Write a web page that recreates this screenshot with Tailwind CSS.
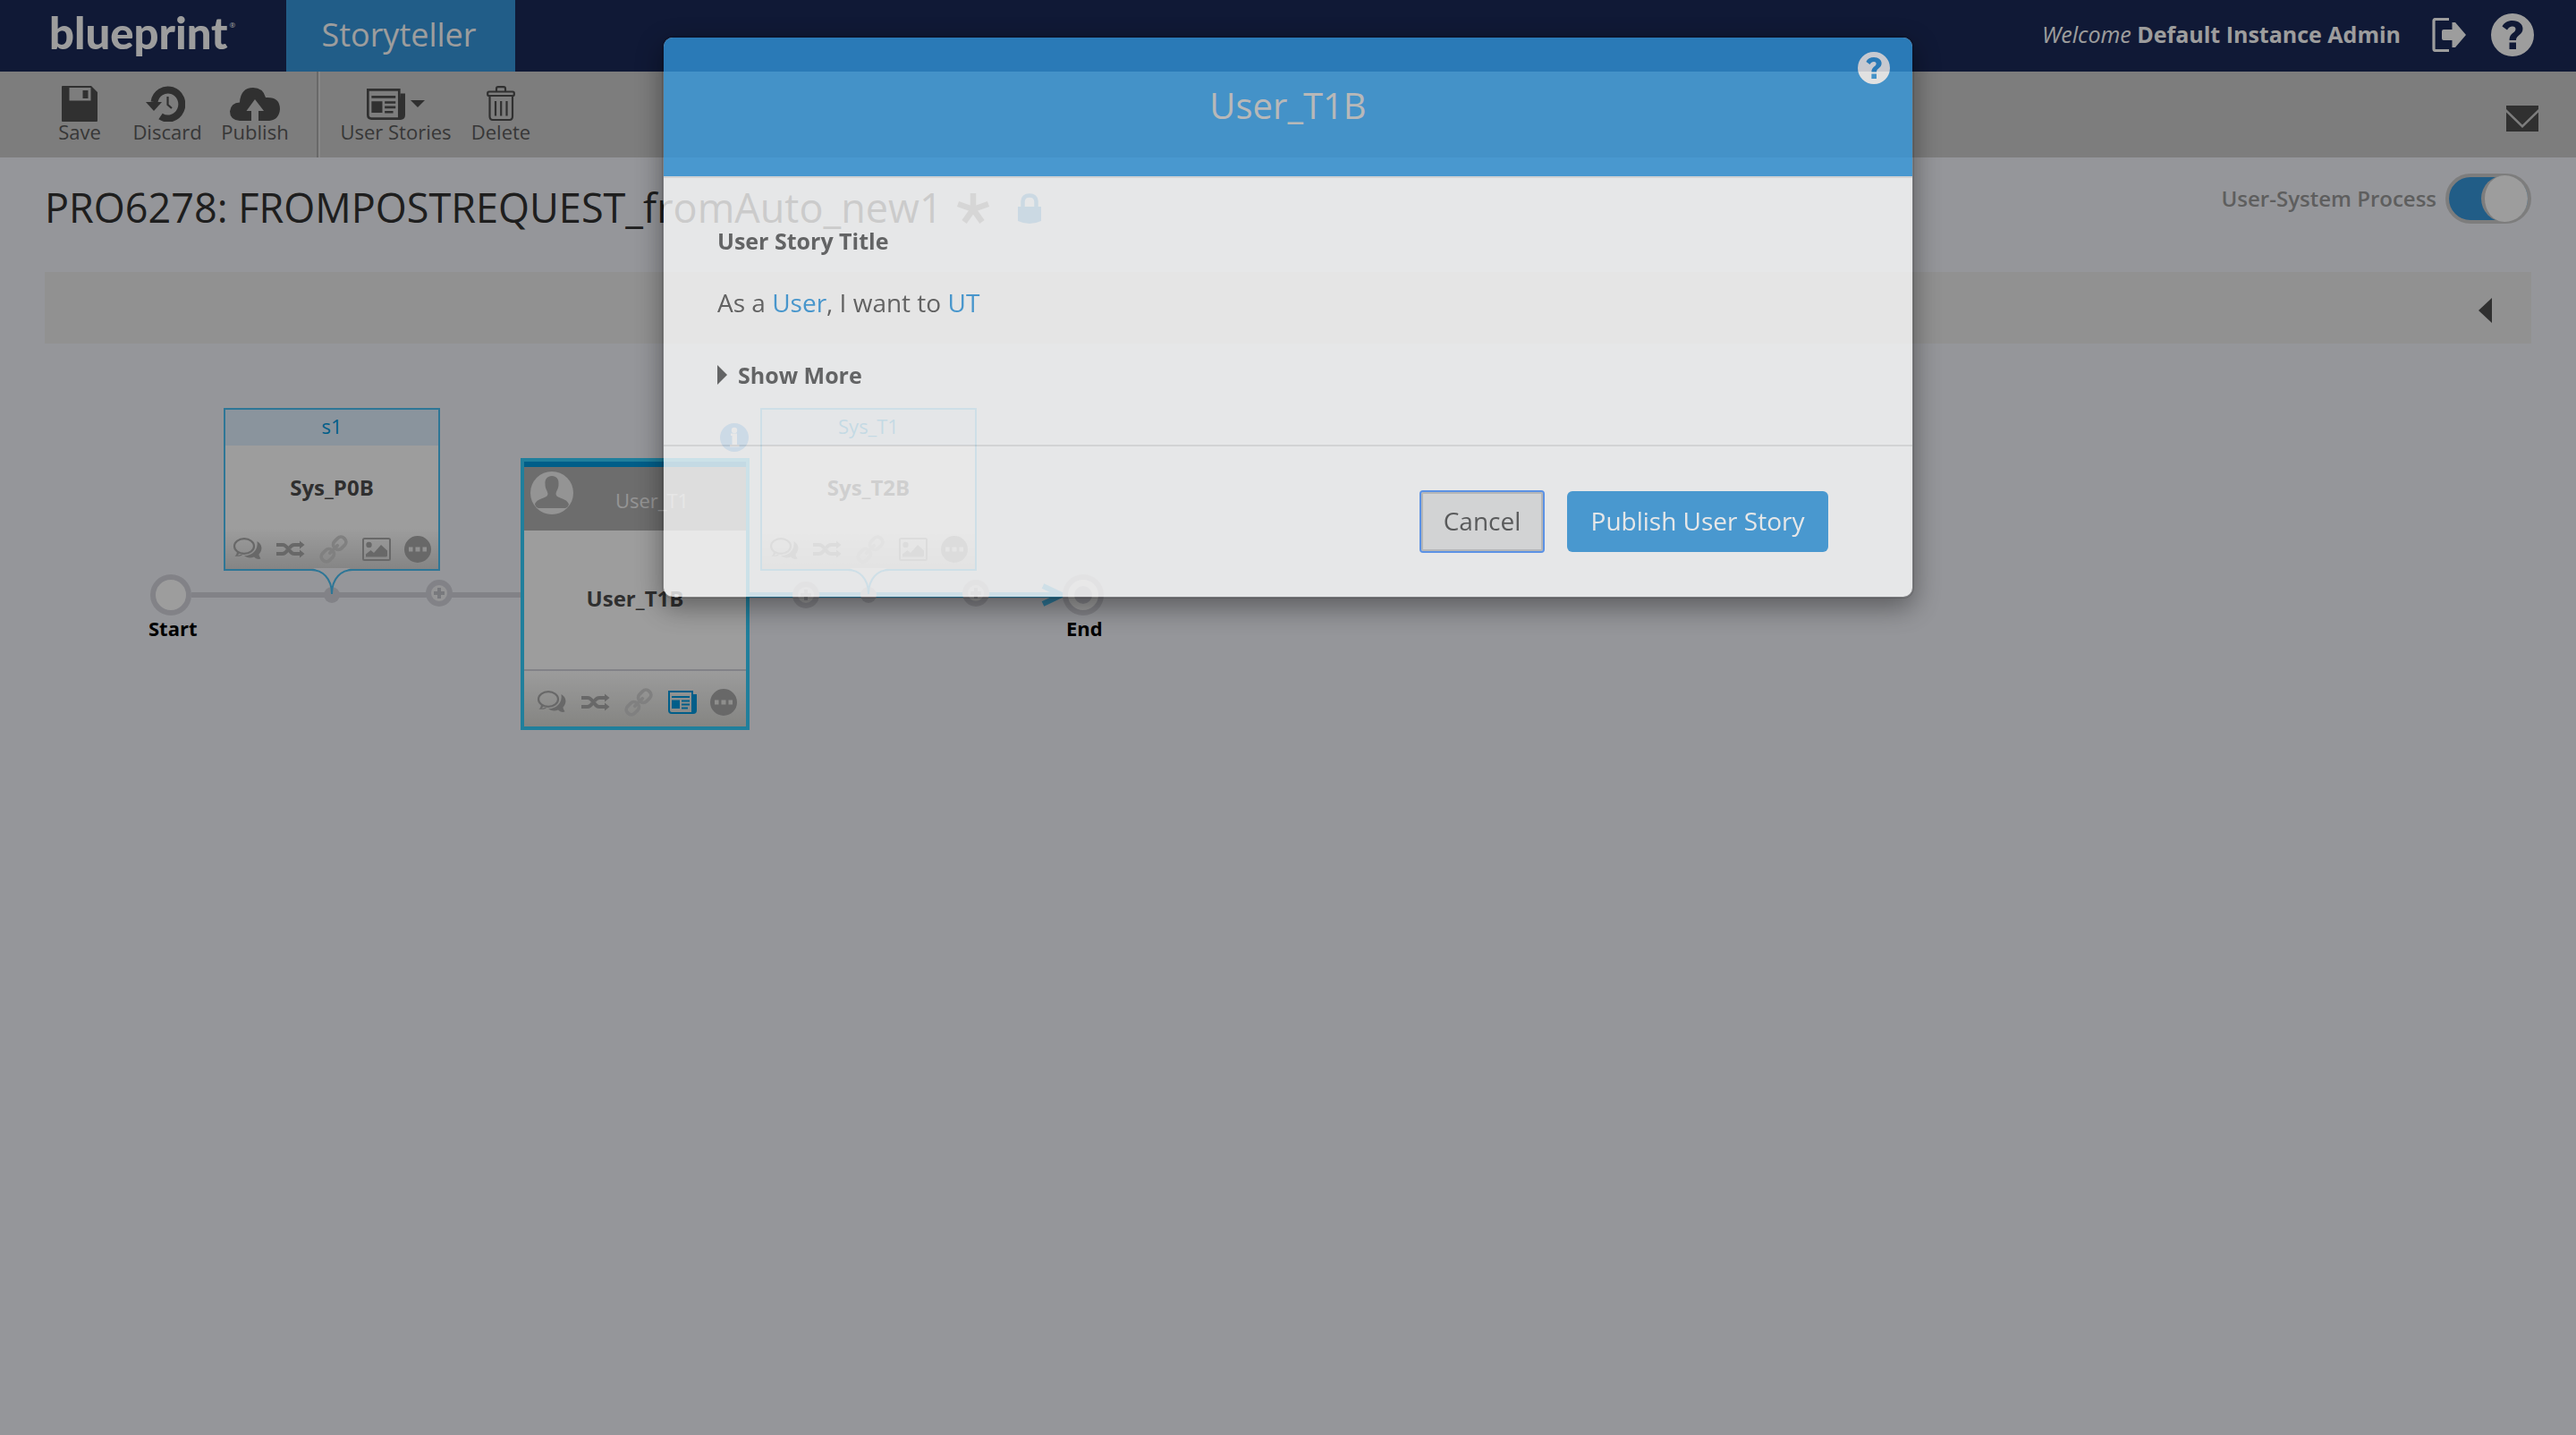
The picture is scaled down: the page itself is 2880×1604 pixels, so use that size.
<!DOCTYPE html>
<html lang="en">
<head>
<meta charset="utf-8">
<title>Storyteller</title>
<script src="https://cdn.jsdelivr.net/npm/@tailwindcss/browser@4"></script>
</head>
<body class="min-h-screen bg-[#f2f4fa] font-['Open_Sans',sans-serif] text-[#4d4d4d]">

<!-- shared icons -->
<svg class="hidden" aria-hidden="true">
  <symbol id="comments" viewBox="0 0 34 28">
    <ellipse cx="13" cy="10.500" rx="11" ry="8.400" fill="none" stroke="currentColor" stroke-width="2.200"/>
    <path d="M5 16.500 L7.500 18 C7 19.500 6 20.500 5.500 20.500 C8 20.500 10 20 12 18.500 L10 21 C7.500 22 4.500 22 2.500 21.700 C4 20.500 5 18.500 5 16.500z" fill="currentColor"/>
    <path d="M27.500 5 C33.500 8.500 34 15 29.500 19.500 C29.500 21.500 31 23 31.500 24.500 C28.500 25.500 26 24.500 24 22.500 C20 24.500 15 23 13 21.300 C22 21 29 15 27.500 5z" fill="currentColor"/>
  </symbol>
  <symbol id="shuffle" viewBox="0 0 32 20">
    <path d="M0 5 H7 C13 5 14 15 20 15 H26" fill="none" stroke="currentColor" stroke-width="4"/>
    <path d="M0 15 H7 C10 15 11.500 12.500 12.500 11 M14.500 8.500 C16 6.500 17.500 5 20 5 H26" fill="none" stroke="currentColor" stroke-width="4"/>
    <path d="M26 0.500 L31.500 5 L26 9.500z M26 10.500 L31.500 15 L26 19.500z" fill="currentColor"/>
  </symbol>
  <symbol id="link" viewBox="0 0 34 34">
    <g fill="none" stroke="currentColor" stroke-width="3.800" transform="rotate(-45 17 17)">
      <rect x="0" y="11.500" width="15" height="11" rx="5"/>
      <rect x="19" y="11.500" width="15" height="11" rx="5"/>
      <path d="M11 17 H23" stroke-linecap="round"/>
    </g>
  </symbol>
  <symbol id="image" viewBox="0 0 32 26">
    <rect x="1" y="1" width="30" height="24" rx="1.500" fill="none" stroke="currentColor" stroke-width="2"/>
    <circle cx="7.500" cy="8" r="3.200" fill="currentColor"/>
    <path d="M4 21.500 V18.500 L9.500 14 L13 17 L21 8 L28 14.500 V20 Q28 21.500 26 21.500z" fill="currentColor"/>
  </symbol>
  <symbol id="more" viewBox="0 0 30 30">
    <path fill="currentColor" fill-rule="evenodd" d="M15 0a15 15 0 1 0 0 30a15 15 0 1 0 0-30z M5 12.500h4.500v5h-4.500z M12.500 12.500h5v5h-5z M20.500 12.500h4.500v5h-4.500z"/>
  </symbol>
  <symbol id="news" viewBox="0 0 32 26">
    <path d="M1 1 H27 V25 H4 Q1 25 1 22z" fill="none" stroke="currentColor" stroke-width="2"/>
    <path d="M28 4 H32 V22 Q32 26 28 26 H26z M4 6h20v2H4z M4 10.500h9v9.500H4z M15 10.500h9v2h-9z M15 14.500h9v2h-9z M15 18.500h7v2h-7z" fill="currentColor"/>
  </symbol>
  <symbol id="help" viewBox="0 0 48 48">
    <path fill="currentColor" fill-rule="evenodd" d="M24 0a24 24 0 1 0 0 48a24 24 0 1 0 0-48z M12.500 14.500 C14.500 10.500 18.500 8 24 8 C31 8 35.500 12 35.500 17 C35.500 24.500 28 24 28 30 H20.500 C20.500 21.500 27.500 22 27.500 17.500 C27.500 15.500 26 14.500 24 14.500 C21.500 14.500 19.500 16 18 18.500z M20.500 32.500h7.500v7.500h-7.500z"/>
  </symbol>
</svg>

<header class="flex h-20 items-stretch bg-[#1a2a58] text-white">
  <a href="#" class="flex w-80 items-center pl-[55px] pb-2 font-[Lato,sans-serif] text-[49px] leading-none font-black">blueprint<span class="self-start pt-6 pl-0.5 font-['Open_Sans',sans-serif] text-[8px] leading-none font-normal">®</span></a>
  <a href="#" class="flex w-64 items-center justify-center bg-[#3697dd] pr-1 pb-[3px] text-4xl">Storyteller</a>
  <div class="flex flex-1 items-center justify-end gap-[35px] pr-[47px] pb-[3px]">
    <p class="text-[25px]"><i>Welcome</i> <b>Default Instance Admin</b></p>
    <div class="flex items-center gap-7">
      <button aria-label="Log out">
        <svg class="h-[38px] w-[38px]" viewBox="0 0 38 38"><path d="M19 1.500 H4 Q2 1.500 2 3.500 V34.500 Q2 36.500 4 36.500 H19" fill="none" stroke="currentColor" stroke-width="3.200"/><path d="M13 13 H22.500 V5 H26 L38 19 L26 33 H22.500 V25 H13 Q11 25 11 23 V15 Q11 13 13 13z" fill="currentColor"/></svg>
      </button>
      <button aria-label="Help"><svg class="size-12"><use href="#help"/></svg></button>
    </div>
  </div>
</header>

<nav class="flex h-24 items-stretch bg-[#cbcbcb] pr-[42px] pl-10 text-[22px] leading-[22px] text-[#5a5a5a]">
  <button class="flex w-[98px] flex-col items-center pt-4">
    <svg class="h-10 w-10 text-[#4e4e4e]" viewBox="0 0 40 40"><path fill="currentColor" fill-rule="evenodd" d="M1 0 H33 L40 7 V39 Q40 40 39 40 H1 Q0 40 0 39 V1 Q0 0 1 0z M8.500 2 V16.500 H32.500 V2z M23.500 5 h6 v9 h-6z"/></svg>
    Save
  </button>
  <button class="flex w-[98px] flex-col items-center pt-4">
    <svg class="mr-1 h-10 w-11 text-[#4e4e4e]" viewBox="0 0 44 40"><path d="M9.500 18 A15.500 16 0 1 1 16.500 34" fill="none" stroke="currentColor" stroke-width="8"/><path d="M0 18 H18 L9 28z" fill="currentColor"/><path d="M24.500 12 V21 L29 25" fill="none" stroke="currentColor" stroke-width="2.200"/></svg>
    Discard
  </button>
  <button class="flex w-[98px] flex-col items-center pt-4">
    <svg class="h-10 w-14 text-[#4e4e4e]" viewBox="0 0 56 40"><path fill="currentColor" d="M11 39 Q0 38 0 28.500 Q1 19 11 18.500 Q12 2 26 2 Q37 2 40 13 Q56 12 56 26 Q55 38 44 39 H32 V28 H38 L28 15 L18.500 28 H24 V39z"/></svg>
    Publish
  </button>
  <div class="ml-5 border-l-2 border-[#aaa]"></div>
  <div class="border-l-2 border-[#dcdcdc]"></div>
  <button class="ml-4 flex w-[137px] flex-col items-center pt-4 whitespace-nowrap">
    <span class="flex h-10 items-center gap-1.5 text-[#4e4e4e]">
      <svg class="h-[35px] w-[43px]"><use href="#news"/></svg>
      <svg class="h-2 w-4" viewBox="0 0 16 8"><path d="M0 0H16L8 8z" fill="currentColor"/></svg>
    </span>
    User Stories
  </button>
  <button class="flex w-[98px] flex-col items-center pt-4">
    <svg class="h-10 w-8 text-[#4e4e4e]" viewBox="0 0 32 40" fill="none" stroke="currentColor" stroke-width="2.200"><rect x="1.200" y="6.500" width="29.600" height="4.500" rx="1.500"/><path d="M11 6 V3 Q11 1.200 13 1.200 H19 Q21 1.200 21 3 V6 M3.500 11 V34 Q3.500 38 7 38 H25.500 Q29 38 29 34 V11 M10 17 V33.500 M16.200 17 V33.500 M22.500 17 V33.500"/></svg>
    Delete
  </button>
  <button class="ml-auto self-center pt-2" aria-label="Messages">
    <svg class="h-[29px] w-9 text-[#4e4e4e]" viewBox="0 0 36 29" fill="currentColor"><path d="M0 0H36V4L18 21.500L0 4z M0 7.500 L18 25 L36 7.500 V29 H0z"/></svg>
  </button>
</nav>

<main>
  <div class="px-[50px] pt-[18px]">
    <div class="flex items-start">
      <h1 class="pt-2 text-[45px] leading-[60px] whitespace-nowrap text-[#313131]">PRO6278: FROMPOSTREQUEST_fromAuto_new1</h1>
      <svg class="mt-[22px] ml-4 h-[34px] w-9 text-[#838383]" viewBox="0 0 36 34"><path d="M18 18 V0 M18 18 L1 12 M18 18 L35 12 M18 18 L8 32 M18 18 L28 32" stroke="currentColor" stroke-width="6.500" fill="none"/></svg>
      <svg class="mt-[22px] ml-8 h-[34px] w-[26px] text-[#3498db]" viewBox="0 0 26 34"><path d="M5.500 17 V9 Q6 2.500 13 2.500 Q20 2.500 20.500 9 V17" fill="none" stroke="currentColor" stroke-width="4.500"/><path d="M0 15 H26 V31 Q13 37 0 31z" fill="currentColor"/></svg>
      <label class="ml-auto flex items-center gap-2.5 text-2xl font-semibold text-[#999]">
        User-System Process
        <input type="checkbox" checked class="flex h-14 w-24 appearance-none items-center justify-end rounded-full border-4 border-[#ccc] bg-[#3697dc] before:size-[52px] before:shrink-0 before:rounded-full before:border-l-4 before:border-[#ccc] before:bg-white">
      </label>
    </div>
    <div class="mt-[42px] flex h-20 items-center justify-end bg-[#ececeb] pt-1.5 pr-11">
      <button aria-label="Expand"><svg class="h-7 w-[15px]" viewBox="0 0 15 28"><path d="M15 0V28L0 14z" fill="#4e4e4e"/></svg></button>
    </div>
  </div>

  <!-- process diagram canvas -->
  <section class="relative h-[440px]">
    <article class="absolute top-[72px] left-[250px] flex h-[182px] w-[242px] flex-col border-2 border-[#4bc0f4] bg-white">
      <h2 class="flex h-10 items-center justify-center bg-[#e0f1ff] pb-1 text-[22px] text-[#0099de]">s1</h2>
      <p class="flex h-[93px] items-center justify-center text-2xl font-bold">Sys_P0B</p>
      <div class="flex flex-1 items-center justify-between bg-linear-to-b from-white to-[#d8d8d8] px-2 text-[#aaa]">
        <svg class="h-7 w-[34px]"><use href="#comments"/></svg>
        <svg class="h-5 w-8"><use href="#shuffle"/></svg>
        <svg class="size-[34px] text-[#d0d0d0]"><use href="#link"/></svg>
        <svg class="h-[26px] w-8"><use href="#image"/></svg>
        <svg class="size-[30px]"><use href="#more"/></svg>
      </div>
    </article>

    <article class="absolute top-[128px] left-[582px] flex h-[304px] w-64 flex-col border-4 border-[#34cffe] bg-white">
      <h2 class="relative flex h-[77px] items-center justify-center border-t-6 border-[#0099de] bg-[#b1b1b1] pt-1 pl-[38px] text-[22px] text-[#f2f2f2]">
        <svg class="absolute top-[5px] left-[7px] size-12" viewBox="0 0 48 48"><circle cx="24" cy="24" r="24" fill="#f0f0f0"/><path fill="#b1b1b1" d="M24 5 C29 5 32 8.500 31.500 14 C31.500 20 29 21 28.500 25 C29 31 41 29 43 37 Q42 40 39 41 H9 Q6 40 5 37 C7 29 19 31 19.500 25 C19 21 16.500 20 16.500 14 C16 8.500 19 5 24 5z"/></svg>
        User_T1
      </h2>
      <p class="flex h-[155px] items-center justify-center pb-1 text-2xl font-bold">User_T1B</p>
      <div class="flex flex-1 items-center justify-between border-t-2 border-[#d4d4dc] bg-linear-to-b from-[#fdfdfd] to-[#d8d8d4] pt-2 pr-2.5 pl-3.5 text-[#aaa]">
        <svg class="h-7 w-[34px]"><use href="#comments"/></svg>
        <svg class="h-5 w-8"><use href="#shuffle"/></svg>
        <svg class="size-[34px] text-[#d0d0d0]"><use href="#link"/></svg>
        <svg class="h-[26px] w-8 text-[#0099de]"><use href="#news"/></svg>
        <svg class="size-[30px]"><use href="#more"/></svg>
      </div>
    </article>

    <article class="absolute top-[72px] left-[850px] flex h-[182px] w-[242px] flex-col border-2 border-[#4bc0f4] bg-white">
      <h2 class="flex h-10 items-center justify-center bg-[#e0f1ff] pb-1 text-[22px] text-[#0099de]">Sys_T1</h2>
      <p class="flex h-[93px] items-center justify-center text-2xl font-bold">Sys_T2B</p>
      <div class="flex flex-1 items-center justify-between bg-linear-to-b from-white to-[#d8d8d8] px-2 text-[#aaa]">
        <svg class="h-7 w-[34px]"><use href="#comments"/></svg>
        <svg class="h-5 w-8"><use href="#shuffle"/></svg>
        <svg class="size-[34px] text-[#d0d0d0]"><use href="#link"/></svg>
        <svg class="h-[26px] w-8"><use href="#image"/></svg>
        <svg class="size-[30px]"><use href="#more"/></svg>
      </div>
    </article>

    <!-- connectors, ports and terminals -->
    <svg class="absolute top-0 left-0 h-[440px] w-[1300px]" viewBox="0 384 1300 440" fill="none">
      <path d="M214 665H582" stroke="#d3d4dc" stroke-width="6"/>
      <path d="M838 665H1186" stroke="#4bc0f4" stroke-width="6"/>
      <path d="M1166 655L1187 665L1166 675" stroke="#4bc0f4" stroke-width="6"/>
      <g fill="#d3d4dc"><circle cx="371" cy="665" r="9"/><circle cx="971" cy="665" r="9"/></g>
      <g id="tail"><path d="M350 635H392L380 642L371 660L362 642z" fill="#f4f4f8"/><path d="M348 637C360 637 371 646 371 664C371 646 382 637 394 637" stroke="#4bc0f4" stroke-width="2"/></g>
      <use href="#tail" x="600"/>
      <g id="port"><circle cx="491" cy="663" r="12" fill="#f2f2f4" stroke="#d3d4dc" stroke-width="6"/><path d="M485 663H497M491 657V669" stroke="#c4c5cc" stroke-width="4"/></g>
      <use href="#port" x="410" y="2"/>
      <use href="#port" x="600"/>
      <circle cx="191" cy="665" r="20" fill="#fff" stroke="#d3d4dc" stroke-width="6"/>
      <circle cx="1211" cy="665" r="20" fill="#fff" stroke="#d3d4dc" stroke-width="6"/>
      <circle cx="1211" cy="665" r="10" fill="#d3d4dc"/>
      <circle cx="821" cy="489" r="16" fill="#3c9bf0"/>
      <path d="M817 484.500H824V497H826.500V499.500H816V497H818.500V487H817z" fill="#fff"/><circle cx="821" cy="481" r="3.200" fill="#fff"/>
    </svg>
    <p class="absolute top-[302px] left-[166px] text-[22px] leading-8 font-bold text-black">Start</p>
    <p class="absolute top-[302px] left-[1192px] text-[22px] leading-8 font-bold text-black">End</p>
  </section>
</main>

<div class="fixed inset-0 bg-black/[.385]"></div>

<div class="fixed inset-x-0 top-10 flex justify-center">
  <div role="dialog" aria-labelledby="dlg" class="w-[1400px] overflow-hidden rounded-xl border-2 border-black/20 bg-white bg-clip-padding text-[#555] opacity-77 shadow-[0_10px_30px_rgba(0,0,0,0.5)]">
    <div class="relative flex h-[157px] items-center justify-center border-b-2 border-[#e5e5e5] bg-[#3399df] pb-1">
      <h2 id="dlg" class="text-[40px] text-[#cacaca]">User_T1B</h2>
      <button class="absolute top-4 right-[25px] text-white" aria-label="Help"><svg class="size-9"><use href="#help"/></svg></button>
    </div>
    <div class="px-[60px] pt-[52px] pb-[60px]">
      <h3 class="text-[25px] leading-9 font-bold">User Story Title</h3>
      <p class="mt-[31px] text-[28px] leading-10">As a <a href="#" class="text-[#3399df]">User</a>, I want to <a href="#" class="text-[#3399df]">UT</a></p>
      <button class="mt-[43px] flex items-center gap-3 text-[25px] leading-9 font-bold">
        <svg class="h-[22px] w-[11px]" viewBox="0 0 11 22"><path d="M0 0L11 11L0 22z" fill="currentColor"/></svg>Show More
      </button>
    </div>
    <div class="flex items-center justify-end gap-[27px] border-t-2 border-[#e5e5e5] pt-[50px] pr-[94px] pb-[50px] text-[28px]">
      <button class="h-[66px] w-[136px] rounded-xs border-2 border-[#c0c0c0] bg-[#e6e6e6] pb-0.5 text-[#484848] outline-2 outline-[#4c91fa]">Cancel</button>
      <button class="h-[68px] w-[292px] rounded-md bg-[#3399df] pb-0.5 text-white">Publish User Story</button>
    </div>
  </div>
</div>
</body>
</html>
